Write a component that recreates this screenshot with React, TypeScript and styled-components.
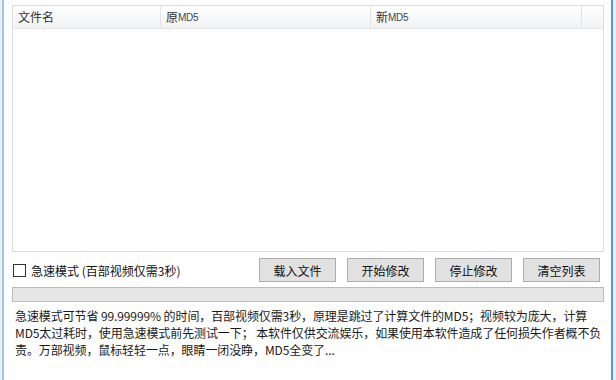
import styled, { createGlobalStyle } from "styled-components"

const GlobalStyle = createGlobalStyle`
html, body {
    margin: 0;
    padding: 0;
    background: #ffffff;
}
body {
    font-family: "Noto Sans CJK SC", "Noto Sans", sans-serif;
    font-size: 12px;
    color: #1a1a1a;
}
`

const columns = [
    { title: "文件名", width: 148 },
    { title: "原", md5: true, width: 210 },
    { title: "新", md5: true, width: 211 },
    { title: "", width: 21 },
]

const App = () => {
    return (
        <>
            <GlobalStyle />
            <Frame>
                <Edge />
                <Main>
                    <ListView>
                        <HeaderRow>
                            {columns.map((c, i) => (
                                <HeaderCell key={i} $w={c.width}>
                                    {c.title}
                                    {c.md5 && <Md5>MD5</Md5>}
                                </HeaderCell>
                            ))}
                        </HeaderRow>
                    </ListView>
                    <ControlRow>
                        <CheckLabel>
                            <CheckBox />
                            急速模式 (百部视频仅需3秒)
                        </CheckLabel>
                        <Buttons>
                            <Button>载入文件</Button>
                            <Button>开始修改</Button>
                            <Button>停止修改</Button>
                            <Button>清空列表</Button>
                        </Buttons>
                    </ControlRow>
                    <Progress />
                    <Notes>
                        急速模式可节省 99.99999% 的时间，百部视频仅需3秒，原理是跳过了计算文件的MD5；视频较为庞大，计算MD5太过耗时，使用急速模式前先测试一下； 本软件仅供交流娱乐，如果使用本软件造成了任何损失作者概不负责。万部视频，鼠标轻轻一点，眼睛一闭没睁，MD5全变了...
                    </Notes>
                </Main>
                <Edge $right />
            </Frame>
        </>
    )
}

export default App

const Frame = styled.div`
width: 616px;
height: 380px;
display: flex;
background: #ffffff;
overflow: hidden;
`
const Edge = styled.div<{ $right?: boolean }>`
width: ${p => (p.$right ? "5px" : "2px")};
height: 100%;
background: #eeeeee;
${p => (p.$right ? "border-left: 2px solid #4d9be6;" : "border-right: 2px solid #9cc6ee;")}
flex-shrink: 0;
`
const Main = styled.div`
flex: 1;
padding: 5px 7px 0 8px;
display: flex;
flex-direction: column;
`
const ListView = styled.div`
height: 247px;
border: 1px solid #dcdcdc;
box-sizing: border-box;
background: #ffffff;
`
const HeaderRow = styled.div`
display: flex;
height: 22px;
background: linear-gradient(#ffffff, #f1f2f4);
border-bottom: 1px solid #e5e5e5;
`
const HeaderCell = styled.div<{ $w: number }>`
width: ${p => p.$w}px;
box-sizing: border-box;
border-right: 1px solid #e2e3e5;
padding-left: 5px;
display: flex;
align-items: center;
font-size: 12px;
line-height: 22px;
color: #333333;
&:last-child {
    border-right: none;
}
`
const Md5 = styled.span`
font-family: "Liberation Sans", sans-serif;
font-size: 10px;
line-height: 10px;
margin-top: 2px;
color: #3a4a5a;
letter-spacing: -0.3px;
`
const ControlRow = styled.div`
display: flex;
align-items: center;
justify-content: space-between;
margin-top: 6px;
height: 24px;
`
const CheckLabel = styled.label`
display: flex;
align-items: center;
gap: 5px;
padding-left: 1px;
font-size: 12px;
color: #111111;
`
const CheckBox = styled.span`
width: 13px;
height: 13px;
border: 1px solid #333333;
box-sizing: border-box;
background: #ffffff;
`
const Buttons = styled.div`
display: flex;
gap: 11px;
margin-right: 4px;
`
const Button = styled.div`
width: 77px;
height: 24px;
box-sizing: border-box;
border: 1px solid #adadad;
background: #e1e1e1;
display: flex;
align-items: center;
justify-content: center;
font-size: 12px;
color: #111111;
`
const Progress = styled.div`
height: 15px;
margin-top: 5px;
border: 1px solid #bcbcbc;
box-sizing: border-box;
background: #e6e6e6;
`
const Notes = styled.div`
margin-top: 5px;
padding: 0 0 0 3px;
font-size: 12px;
line-height: 17px;
letter-spacing: -0.1px;
color: #1a1a1a;
`
